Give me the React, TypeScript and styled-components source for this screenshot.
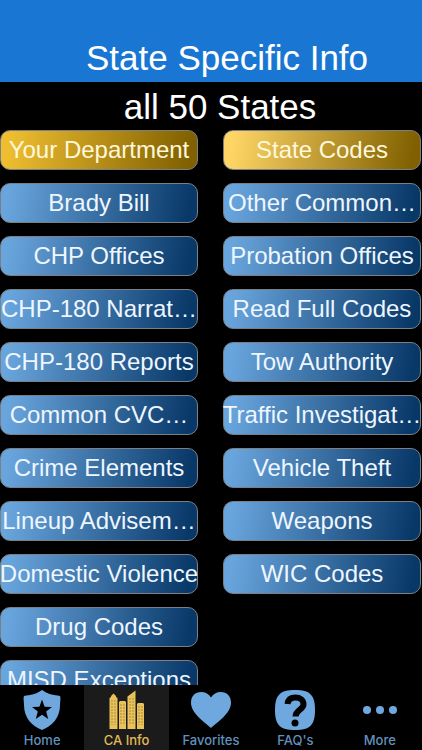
import React from "react";
import styled, { createGlobalStyle } from "styled-components";

const GlobalStyle = createGlobalStyle`
  * { box-sizing: border-box; }
  body { margin: 0; background: #000; }
`;

const Screen = styled.div`
  display: flex;
  flex-direction: column;
  height: 100vh;
  overflow: hidden;
  background: #000;
  color: #fff;
  font-family: "Liberation Sans", Arial, sans-serif;
`;

const Header = styled.header`
  flex: none;
  padding: 38px 0 4px 32px;
  background: #1976d3;
`;

const Title = styled.h1`
  margin: 0;
  font-size: 35px;
  font-weight: 400;
  line-height: 40px;
  text-align: center;
`;

const Content = styled.main`
  flex: 1;
  min-height: 0;
  overflow: hidden;
`;

const Subtitle = styled.h2`
  margin: 0;
  padding: 5px 0 3px 18px;
  font-size: 35px;
  font-weight: 400;
  line-height: 40px;
  text-align: center;
`;

const Columns = styled.div`
  display: grid;
  grid-template-columns: repeat(2, minmax(0, 1fr));
  align-items: start;
  gap: 25px;
  padding-right: 1px;
`;

const Column = styled.div`
  display: flex;
  flex-direction: column;
  gap: 13px;
`;

type Tone = "blue" | "gold" | "paleGold";

const fills: Record<Tone, string> = {
  blue: "linear-gradient(100deg, #69a5dd 5%, #083868 95%)",
  gold: "linear-gradient(100deg, #efbe30 5%, #806000 95%)",
  paleGold: "linear-gradient(100deg, #ffd666 5%, #806000 95%)",
};

const TopicButton = styled.button<{ $tone: Tone }>`
  display: flex;
  align-items: center;
  justify-content: center;
  height: 40px;
  padding: 0;
  border: 1px solid #7b8087;
  border-radius: 10px;
  background: ${(p) => fills[p.$tone]} border-box;
  color: ${(p) => (p.$tone === "blue" ? "#eef6ff" : "#fff8dc")};
  font-family: inherit;
  font-size: 24px;
  line-height: 28px;
  white-space: nowrap;
`;

const TabBar = styled.nav`
  flex: none;
  display: grid;
  grid-template-columns: repeat(5, minmax(0, 1fr));
  height: 65px;
  background: #000;
`;

const Tab = styled.button<{ $active?: boolean }>`
  display: flex;
  flex-direction: column;
  align-items: center;
  gap: 1px;
  padding: 4px 0 0;
  border: 0;
  background: ${(p) => (p.$active ? "#1b1b1b" : "#000")};
  color: ${(p) => (p.$active ? "#e9c35a" : "#6fa8df")};
`;

const TabIcon = styled.svg`
  display: block;
  width: 44px;
  height: 42px;
`;

const TabLabel = styled.span<{ $active?: boolean }>`
  color: ${(p) => (p.$active ? "#e0bb55" : "#6291bf")};
  font-family: Inter, "Liberation Sans", sans-serif;
  font-size: 13px;
  font-weight: 500;
  line-height: 16px;
`;

type Topic = { label: string; tone?: Tone };

const columns: Topic[][] = [
  [
    { label: "Your Department", tone: "gold" },
    { label: "Brady Bill" },
    { label: "CHP Offices" },
    { label: "CHP-180 Narrat…" },
    { label: "CHP-180 Reports" },
    { label: "Common CVC…" },
    { label: "Crime Elements" },
    { label: "Lineup Advisem…" },
    { label: "Domestic Violence" },
    { label: "Drug Codes" },
    { label: "MISD Exceptions" },
  ],
  [
    { label: "State Codes", tone: "paleGold" },
    { label: "Other Common…" },
    { label: "Probation Offices" },
    { label: "Read Full Codes" },
    { label: "Tow Authority" },
    { label: "Traffic Investigat…" },
    { label: "Vehicle Theft" },
    { label: "Weapons" },
    { label: "WIC Codes" },
  ],
];

const shield = (
  <>
    <path
      d="M22 1C17 5 10 6 4 7C3 9 4 12 4 16C4 29 12 37 22 41C32 37 40 29 40 16C40 12 41 9 40 7C34 6 27 5 22 1Z"
      fill="currentColor"
    />
    <path d="M22 10.5L24.6 17.8L32 18L26.2 22.6L28.2 30L22 25.8L15.8 30L17.8 22.6L12 18L19.4 17.8Z" fill="#000" />
  </>
);

const towers = (
  <>
    <path
      d="M4.500 40V9L6 8V7L8.500 4.500L11 7V8L12.500 9V40ZM14 40V13L15 12H20L21 13V40ZM22.500 40V7.500L30.500 1.500V40ZM32 40V15L33 14H38L39 15V40Z"
      fill="currentColor"
    />
    <path
      d="M7 11V36M10 11V36M16 15V36M19 15V36M25 9V36M28 9V36M34 17V36M37 17V36"
      stroke="#a98b3c"
      strokeWidth="1"
      strokeDasharray="2 1"
    />
  </>
);

const heart = (
  <path
    d="M22 39C17 34 2 25 2 13.5C2 7 6.500 3 12 3C16.500 3 20 5 22 8.500C24 5 27.500 3 32 3C37.500 3 42 7 42 13.500C42 25 27 34 22 39Z"
    fill="currentColor"
  />
);

const question = (
  <>
    <path
      d="M22 1C37 1 42 6 42 21C42 36 37 41 22 41C7 41 2 36 2 21C2 6 7 1 22 1Z"
      fill="currentColor"
    />
    <path
      d="M14.500 15C15 10.500 18 8.500 22.500 8.500C27 8.500 30.500 11 30.500 15.500C30.500 20.500 22.500 21 22.500 27.500"
      fill="none"
      stroke="#000"
      strokeWidth="6"
    />
    <circle cx="22" cy="34" r="3.500" fill="#000" />
  </>
);

const dots = (
  <>
    <circle cx="9" cy="21" r="4" fill="currentColor" />
    <circle cx="22" cy="21" r="4" fill="currentColor" />
    <circle cx="35" cy="21" r="4" fill="currentColor" />
  </>
);

const tabs = [
  { label: "Home", icon: shield },
  { label: "CA Info", icon: towers, active: true },
  { label: "Favorites", icon: heart },
  { label: "FAQ's", icon: question },
  { label: "More", icon: dots },
];

export default function App() {
  return (
    <>
      <GlobalStyle />
      <Screen>
        <Header>
          <Title>State Specific Info</Title>
        </Header>
        <Content>
          <Subtitle>all 50 States</Subtitle>
          <Columns>
            {columns.map((topics, i) => (
              <Column key={i}>
                {topics.map(({ label, tone = "blue" }) => (
                  <TopicButton key={label} type="button" $tone={tone}>
                    {label}
                  </TopicButton>
                ))}
              </Column>
            ))}
          </Columns>
        </Content>
        <TabBar aria-label="Main">
          {tabs.map(({ label, icon, active }) => (
            <Tab key={label} type="button" $active={active} aria-current={active ? "page" : undefined}>
              <TabIcon viewBox="0 0 44 42" aria-hidden="true">
                {icon}
              </TabIcon>
              <TabLabel $active={active}>{label}</TabLabel>
            </Tab>
          ))}
        </TabBar>
      </Screen>
    </>
  );
}
